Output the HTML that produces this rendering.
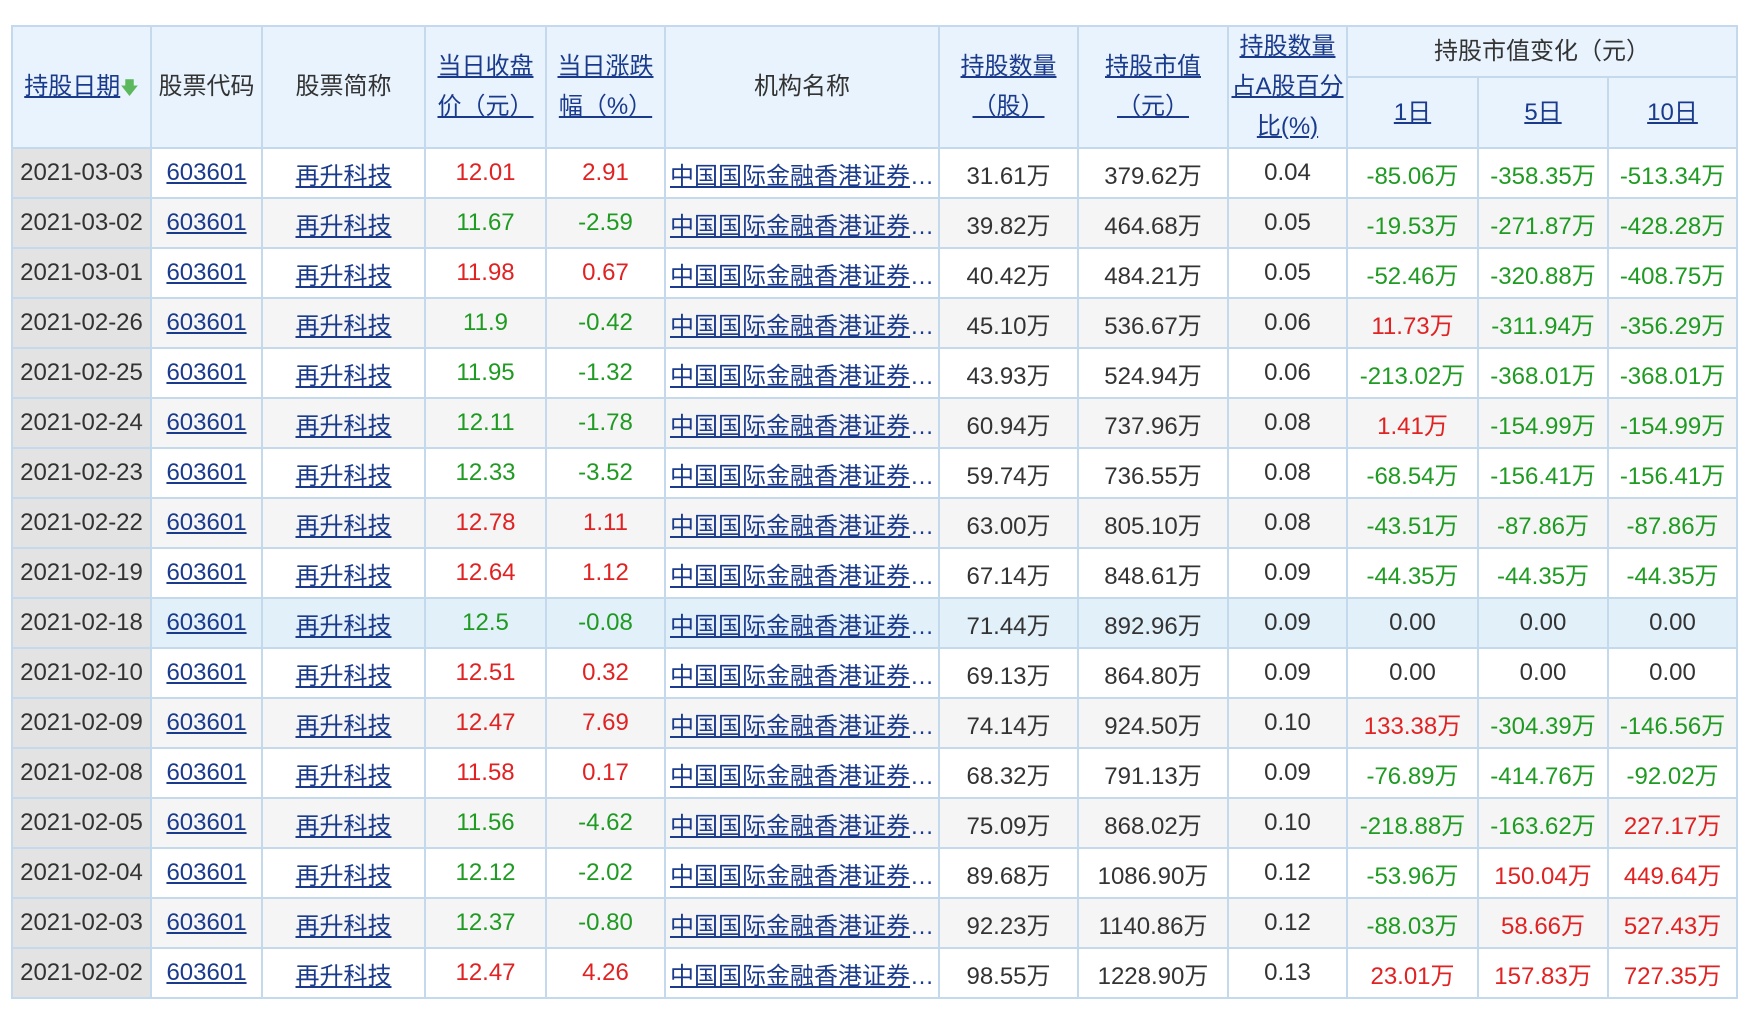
<!DOCTYPE html>
<html><head><meta charset="utf-8"><style>
body{margin:0;background:#fff;width:1754px;height:1022px;overflow:hidden;font-family:"Liberation Sans","Noto Sans CJK SC",sans-serif;}
table{position:absolute;left:11px;top:25px;border-collapse:collapse;table-layout:fixed;width:1725px;font-size:24px;color:#333;}
td,th{border:2px solid #c4d9ec;text-align:center;padding:0;white-space:nowrap;overflow:hidden;}
th{background:#e8f3fd;font-weight:normal;color:#333;line-height:40px;}
th a{color:#1a3a8c;text-decoration:underline;}
tbody tr{height:50px;}
tbody td{height:47px;}
tbody tr:nth-child(even) td{background:#f5f5f5;}
tbody tr.hl td{background:#e2f0fa;}
tbody td:first-child{background:#e3e3e3 !important;}
a{color:#1a3a8c;text-decoration:underline;}
.r{color:#e02222}.g{color:#1f9a22}
td.org{text-align:left;padding-left:4px;color:#1a3a8c;}
</style></head><body>
<table>
<colgroup><col style="width:139px"><col style="width:111px"><col style="width:163px"><col style="width:121px"><col style="width:119px"><col style="width:274px"><col style="width:139px"><col style="width:150px"><col style="width:119px"><col style="width:131px"><col style="width:130px"><col style="width:129px"></colgroup>
<thead>
<tr style="height:51px"><th rowspan="2"><a>持股日期</a><span style="color:#5cb85c;font-size:18px">🡇</span></th><th rowspan="2">股票代码</th><th rowspan="2">股票简称</th><th rowspan="2"><a>当日收盘<br>价（元）</a></th><th rowspan="2"><a>当日涨跌<br>幅（%）</a></th><th rowspan="2">机构名称</th><th rowspan="2"><a>持股数量<br>（股）</a></th><th rowspan="2"><a>持股市值<br>（元）</a></th><th rowspan="2"><a>持股数量<br>占A股百分<br>比(%)</a></th><th colspan="3">持股市值变化（元）</th></tr>
<tr style="height:71px"><th><a>1日</a></th><th><a>5日</a></th><th><a>10日</a></th></tr>
</thead>
<tbody>
<tr><td>2021-03-03</td><td><a>603601</a></td><td><a>再升科技</a></td><td class="r">12.01</td><td class="r">2.91</td><td class="org"><a>中国国际金融香港证券</a>…</td><td>31.61万</td><td>379.62万</td><td>0.04</td><td class="g">-85.06万</td><td class="g">-358.35万</td><td class="g">-513.34万</td></tr>
<tr><td>2021-03-02</td><td><a>603601</a></td><td><a>再升科技</a></td><td class="g">11.67</td><td class="g">-2.59</td><td class="org"><a>中国国际金融香港证券</a>…</td><td>39.82万</td><td>464.68万</td><td>0.05</td><td class="g">-19.53万</td><td class="g">-271.87万</td><td class="g">-428.28万</td></tr>
<tr><td>2021-03-01</td><td><a>603601</a></td><td><a>再升科技</a></td><td class="r">11.98</td><td class="r">0.67</td><td class="org"><a>中国国际金融香港证券</a>…</td><td>40.42万</td><td>484.21万</td><td>0.05</td><td class="g">-52.46万</td><td class="g">-320.88万</td><td class="g">-408.75万</td></tr>
<tr><td>2021-02-26</td><td><a>603601</a></td><td><a>再升科技</a></td><td class="g">11.9</td><td class="g">-0.42</td><td class="org"><a>中国国际金融香港证券</a>…</td><td>45.10万</td><td>536.67万</td><td>0.06</td><td class="r">11.73万</td><td class="g">-311.94万</td><td class="g">-356.29万</td></tr>
<tr><td>2021-02-25</td><td><a>603601</a></td><td><a>再升科技</a></td><td class="g">11.95</td><td class="g">-1.32</td><td class="org"><a>中国国际金融香港证券</a>…</td><td>43.93万</td><td>524.94万</td><td>0.06</td><td class="g">-213.02万</td><td class="g">-368.01万</td><td class="g">-368.01万</td></tr>
<tr><td>2021-02-24</td><td><a>603601</a></td><td><a>再升科技</a></td><td class="g">12.11</td><td class="g">-1.78</td><td class="org"><a>中国国际金融香港证券</a>…</td><td>60.94万</td><td>737.96万</td><td>0.08</td><td class="r">1.41万</td><td class="g">-154.99万</td><td class="g">-154.99万</td></tr>
<tr><td>2021-02-23</td><td><a>603601</a></td><td><a>再升科技</a></td><td class="g">12.33</td><td class="g">-3.52</td><td class="org"><a>中国国际金融香港证券</a>…</td><td>59.74万</td><td>736.55万</td><td>0.08</td><td class="g">-68.54万</td><td class="g">-156.41万</td><td class="g">-156.41万</td></tr>
<tr><td>2021-02-22</td><td><a>603601</a></td><td><a>再升科技</a></td><td class="r">12.78</td><td class="r">1.11</td><td class="org"><a>中国国际金融香港证券</a>…</td><td>63.00万</td><td>805.10万</td><td>0.08</td><td class="g">-43.51万</td><td class="g">-87.86万</td><td class="g">-87.86万</td></tr>
<tr><td>2021-02-19</td><td><a>603601</a></td><td><a>再升科技</a></td><td class="r">12.64</td><td class="r">1.12</td><td class="org"><a>中国国际金融香港证券</a>…</td><td>67.14万</td><td>848.61万</td><td>0.09</td><td class="g">-44.35万</td><td class="g">-44.35万</td><td class="g">-44.35万</td></tr>
<tr class="hl"><td>2021-02-18</td><td><a>603601</a></td><td><a>再升科技</a></td><td class="g">12.5</td><td class="g">-0.08</td><td class="org"><a>中国国际金融香港证券</a>…</td><td>71.44万</td><td>892.96万</td><td>0.09</td><td>0.00</td><td>0.00</td><td>0.00</td></tr>
<tr><td>2021-02-10</td><td><a>603601</a></td><td><a>再升科技</a></td><td class="r">12.51</td><td class="r">0.32</td><td class="org"><a>中国国际金融香港证券</a>…</td><td>69.13万</td><td>864.80万</td><td>0.09</td><td>0.00</td><td>0.00</td><td>0.00</td></tr>
<tr><td>2021-02-09</td><td><a>603601</a></td><td><a>再升科技</a></td><td class="r">12.47</td><td class="r">7.69</td><td class="org"><a>中国国际金融香港证券</a>…</td><td>74.14万</td><td>924.50万</td><td>0.10</td><td class="r">133.38万</td><td class="g">-304.39万</td><td class="g">-146.56万</td></tr>
<tr><td>2021-02-08</td><td><a>603601</a></td><td><a>再升科技</a></td><td class="r">11.58</td><td class="r">0.17</td><td class="org"><a>中国国际金融香港证券</a>…</td><td>68.32万</td><td>791.13万</td><td>0.09</td><td class="g">-76.89万</td><td class="g">-414.76万</td><td class="g">-92.02万</td></tr>
<tr><td>2021-02-05</td><td><a>603601</a></td><td><a>再升科技</a></td><td class="g">11.56</td><td class="g">-4.62</td><td class="org"><a>中国国际金融香港证券</a>…</td><td>75.09万</td><td>868.02万</td><td>0.10</td><td class="g">-218.88万</td><td class="g">-163.62万</td><td class="r">227.17万</td></tr>
<tr><td>2021-02-04</td><td><a>603601</a></td><td><a>再升科技</a></td><td class="g">12.12</td><td class="g">-2.02</td><td class="org"><a>中国国际金融香港证券</a>…</td><td>89.68万</td><td>1086.90万</td><td>0.12</td><td class="g">-53.96万</td><td class="r">150.04万</td><td class="r">449.64万</td></tr>
<tr><td>2021-02-03</td><td><a>603601</a></td><td><a>再升科技</a></td><td class="g">12.37</td><td class="g">-0.80</td><td class="org"><a>中国国际金融香港证券</a>…</td><td>92.23万</td><td>1140.86万</td><td>0.12</td><td class="g">-88.03万</td><td class="r">58.66万</td><td class="r">527.43万</td></tr>
<tr><td>2021-02-02</td><td><a>603601</a></td><td><a>再升科技</a></td><td class="r">12.47</td><td class="r">4.26</td><td class="org"><a>中国国际金融香港证券</a>…</td><td>98.55万</td><td>1228.90万</td><td>0.13</td><td class="r">23.01万</td><td class="r">157.83万</td><td class="r">727.35万</td></tr>
</tbody></table>
</body></html>
